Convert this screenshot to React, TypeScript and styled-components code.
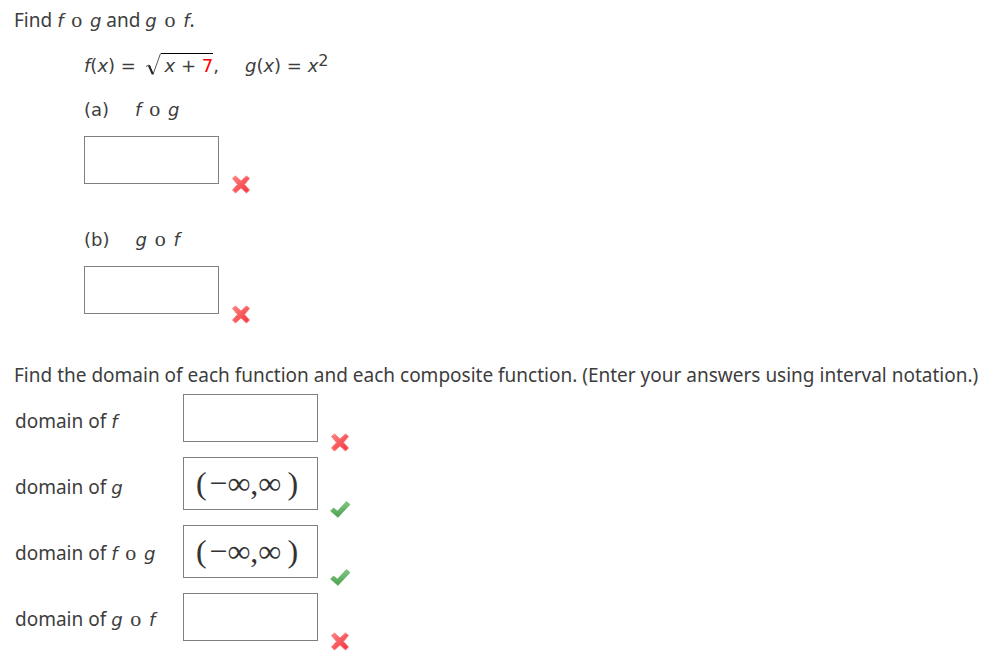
import React from "react";
import styled, { createGlobalStyle } from "styled-components";

const GlobalStyle = createGlobalStyle`
  *, *::before, *::after { box-sizing: border-box; }
  body {
    margin: 0;
    background: #fff;
    color: #3d3d3d;
    font: 19px/24px "Noto Sans", sans-serif;
  }
`;

const Page = styled.main`
  padding: 8px 14px 0;
`;

const Line = styled.p`
  margin: 0;
`;

const Functions = styled.section`
  padding-left: 70px;
  margin-bottom: 25px;
`;

const Math = styled.span`
  font-family: "DejaVu Sans", sans-serif;
  font-size: 18px;
  white-space: pre;
`;

const Definitions = styled.div`
  display: flex;
  align-items: baseline;
  gap: 26px;
  margin-top: 20px;
  height: 25px;
`;

const Root = styled.span`
  display: inline-flex;
  align-items: baseline;
  margin-left: 3px;
`;

const Radical = styled.svg`
  align-self: flex-start;
  width: 16px;
  height: 23px;
`;

const Radicand = styled.span`
  border-top: 1px solid #000;
  padding-left: 4px;
`;

const Red = styled.span`
  color: #f00;
`;

const Power = styled.sup`
  font-size: 16px;
  line-height: 0;
  vertical-align: 6px;
`;

const Part = styled.div`
  margin-top: 20px;
  height: 110px;
`;

const PartLabel = styled.label`
  display: flex;
  gap: 26px;
  margin-bottom: 14px;
`;

const Ring = styled.span`
  margin: 0 2px;
  font-family: "Liberation Serif", serif;
  font-size: 22px;
  line-height: 1;
`;

const Answer = styled.div<{ $tall?: boolean }>`
  display: flex;
  align-items: flex-end;
  gap: 12px;
  height: ${(p) => (p.$tall ? "63px" : "58px")};
`;

const AnswerBox = styled.input<{ $tall?: boolean }>`
  align-self: flex-start;
  width: 135px;
  height: ${(p) => (p.$tall ? "53px" : "48px")};
  padding: 0 12px;
  border: 1px solid #808080;
  border-radius: 0;
  background: #fff;
  color: #333;
  font: 32px "Liberation Serif", serif;
  outline: none;
`;

const MarkIcon = styled.svg`
  width: 20px;
  height: 20px;
  flex: none;
`;

const Domains = styled.section`
  display: grid;
  grid-template-columns: 169px 1fr;
  margin-top: 1px;
`;

const DomainLabels = styled.div`
  display: grid;
  grid-auto-rows: 66px;
  align-items: center;
  padding-left: 1px;
`;

const DomainAnswers = styled.div`
  display: flex;
  flex-direction: column;
  gap: 5px;
  padding-top: 6px;
`;

const F = () => <i>f</i>;
const G = () => <i>g</i>;
const X = () => <i>x</i>;
const O = () => <Ring>o</Ring>;
const FoG = () => <Math><F /> <O /> <G /></Math>;
const GoF = () => <Math><G /> <O /> <F /></Math>;

function Mark({ correct }: { correct?: boolean }) {
  return correct ? (
    <MarkIcon viewBox="0 0 20 20" role="img" aria-label="Correct">
      <defs>
        <linearGradient id="green" x1="0" y1="0" x2="0" y2="1">
          <stop offset="0" stopColor="#7fcb7b" />
          <stop offset="1" stopColor="#4f9f52" />
        </linearGradient>
      </defs>
      <path d="M.5 11 3.5 8 7.5 11 16.5 1.5 20 4.5 8 17.5Z" fill="url(#green)" stroke="#65aa64" strokeWidth=".6" strokeLinejoin="round" />
    </MarkIcon>
  ) : (
    <MarkIcon viewBox="0 0 20 20" role="img" aria-label="Incorrect">
      <defs>
        <linearGradient id="red" x1="0" y1="0" x2="1" y2="1">
          <stop offset="0" stopColor="#ff8585" />
          <stop offset="1" stopColor="#ef3038" />
        </linearGradient>
      </defs>
      <path
        d="M4.5 2 10 7 15.5 2 18.5 4.5 13.5 10.5 18.5 16 15.5 19 10 14 4.5 19 1.5 16 6.5 10.5 1.5 4.5Z"
        fill="url(#red)" stroke="#ff8080" strokeWidth="1" strokeLinejoin="round"
      />
    </MarkIcon>
  );
}

function Field({ id, value = "", correct }: { id: string; value?: string; correct?: boolean }) {
  return (
    <Answer $tall={correct}>
      <AnswerBox id={id} type="text" defaultValue={value} $tall={correct} />
      <Mark correct={correct} />
    </Answer>
  );
}

const INTERVAL = "(\u200A−∞,∞\u2009)";

const domains = [
  { id: "domain-f", name: <Math><F /></Math> },
  { id: "domain-g", name: <Math><G /></Math>, value: INTERVAL, correct: true },
  { id: "domain-fog", name: <FoG />, value: INTERVAL, correct: true },
  { id: "domain-gof", name: <GoF /> },
];

export default function App() {
  return (
    <>
      <GlobalStyle />
      <Page>
        <Line>Find <FoG /> and <GoF />.</Line>
        <Functions>
          <Definitions>
            <Math>
              <F />(<X />) = <Root>
                <Radical viewBox="0 0 16 23" aria-hidden="true">
                  <path d="M1 13.5 4 12 8 21.5 15.5.5" fill="none" stroke="#555" strokeWidth="1" />
                  <path d="M4 12.5 7.7 21" fill="none" stroke="#222" strokeWidth="2" />
                </Radical>
                <Radicand><X /> + <Red>7</Red></Radicand>
              </Root>,
            </Math>
            <Math><G />(<X />) = <X /><Power>2</Power></Math>
          </Definitions>
          <Part>
            <PartLabel htmlFor="part-a"><Math>(a)</Math><FoG /></PartLabel>
            <Field id="part-a" />
          </Part>
          <Part>
            <PartLabel htmlFor="part-b"><Math>(b)</Math><GoF /></PartLabel>
            <Field id="part-b" />
          </Part>
        </Functions>
        <Line>Find the domain of each function and each composite function. (Enter your answers using interval notation.)</Line>
        <Domains>
          <DomainLabels>
            {domains.map((d) => (
              <label key={d.id} htmlFor={d.id}>domain of {d.name}</label>
            ))}
          </DomainLabels>
          <DomainAnswers>
            {domains.map((d) => (
              <Field key={d.id} id={d.id} value={d.value} correct={d.correct} />
            ))}
          </DomainAnswers>
        </Domains>
      </Page>
    </>
  );
}
